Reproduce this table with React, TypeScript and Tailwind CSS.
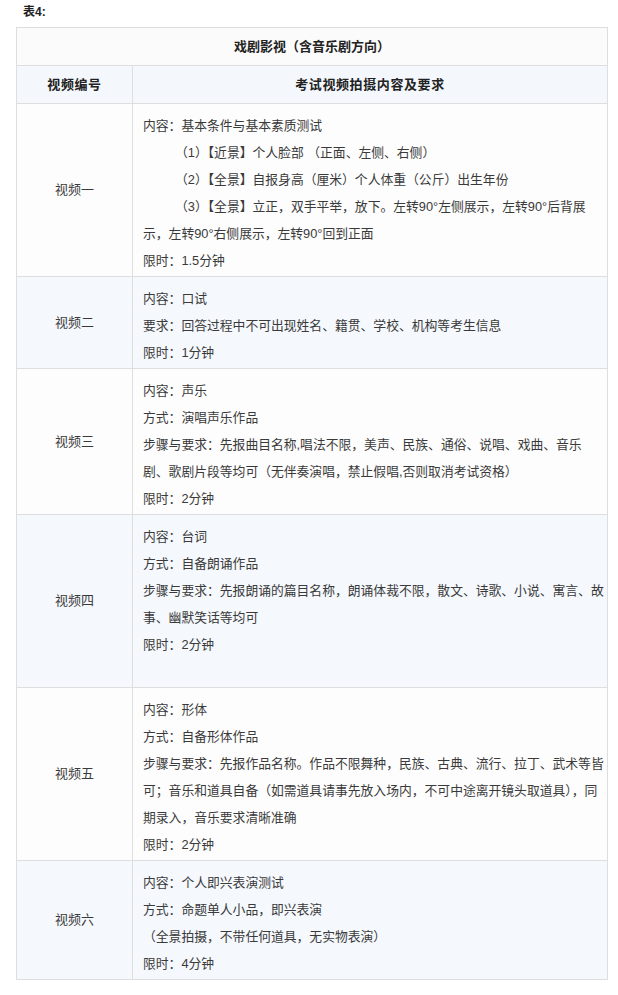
import React from 'react';

type Row = {
  label: string;
  lines: { text: string; indent?: boolean }[];
  blue?: boolean;
  blankEnd?: boolean;
};

const rows: Row[] = [
  {
    label: '视频一',
    lines: [
      { text: '内容：基本条件与基本素质测试' },
      { text: '（1）【近景】个人脸部 （正面、左侧、右侧）', indent: true },
      { text: '（2）【全景】自报身高（厘米）个人体重（公斤）出生年份', indent: true },
      { text: '（3）【全景】立正，双手平举，放下。左转90°左侧展示，左转90°后背展', indent: true },
      { text: '示，左转90°右侧展示，左转90°回到正面' },
      { text: '限时：1.5分钟' },
    ],
  },
  {
    label: '视频二',
    blue: true,
    lines: [
      { text: '内容：口试' },
      { text: '要求：回答过程中不可出现姓名、籍贯、学校、机构等考生信息' },
      { text: '限时：1分钟' },
    ],
  },
  {
    label: '视频三',
    lines: [
      { text: '内容：声乐' },
      { text: '方式：演唱声乐作品' },
      { text: '步骤与要求：先报曲目名称,唱法不限，美声、民族、通俗、说唱、戏曲、音乐' },
      { text: '剧、歌剧片段等均可（无伴奏演唱，禁止假唱,否则取消考试资格）' },
      { text: '限时：2分钟' },
    ],
  },
  {
    label: '视频四',
    blue: true,
    blankEnd: true,
    lines: [
      { text: '内容：台词' },
      { text: '方式：自备朗诵作品' },
      { text: '步骤与要求：先报朗诵的篇目名称，朗诵体裁不限，散文、诗歌、小说、寓言、故' },
      { text: '事、幽默笑话等均可' },
      { text: '限时：2分钟' },
    ],
  },
  {
    label: '视频五',
    lines: [
      { text: '内容：形体' },
      { text: '方式：自备形体作品' },
      { text: '步骤与要求：先报作品名称。作品不限舞种，民族、古典、流行、拉丁、武术等皆' },
      { text: '可；音乐和道具自备（如需道具请事先放入场内，不可中途离开镜头取道具），同' },
      { text: '期录入，音乐要求清晰准确' },
      { text: '限时：2分钟' },
    ],
  },
  {
    label: '视频六',
    blue: true,
    lines: [
      { text: '内容：个人即兴表演测试' },
      { text: '方式：命题单人小品，即兴表演' },
      { text: '（全景拍摄，不带任何道具，无实物表演）' },
      { text: '限时：4分钟' },
    ],
  },
];

export default function App() {
  return (
    <div
      className="min-h-[995px] w-[618px] bg-white text-[13px] text-[#3a3a3a]"
      style={{ fontFamily: '"Liberation Sans", "Noto Sans CJK SC", sans-serif' }}
    >
      <div className="h-[27px] px-[23px] pt-[3px] text-[12px] font-bold leading-[18px] text-[#222]">表4:</div>

      <table className="ml-[16px] w-[592px] table-fixed border-collapse">
        <colgroup>
          <col className="w-[116px]" />
          <col />
        </colgroup>
        <tbody>
          <tr className="bg-[#fbfbfb]">
            <td colSpan={2} className="h-[38px] border border-[#dedede] text-center font-bold text-[#222]">
              戏剧影视（含音乐剧方向）
            </td>
          </tr>
          <tr className="bg-[#f4f8fd]">
            <td className="h-[38px] border border-[#dedede] text-center font-bold tracking-[0.6px] text-[#222]">
              视频编号
            </td>
            <td className="h-[38px] border border-[#dedede] text-center font-bold tracking-[0.6px] text-[#222]">
              考试视频拍摄内容及要求
            </td>
          </tr>
          {rows.map((row) => (
            <tr key={row.label} className={row.blue ? 'bg-[#f5f8fd]' : 'bg-[#fdfdfd]'}>
              <td className="border border-[#dedede] text-center align-middle">{row.label}</td>
              <td className="border border-[#dedede] px-[10px] pt-[8px] pb-[2px] align-top text-[12.8px] leading-[27px]">
                {row.lines.map((line, i) => (
                  <div
                    key={i}
                    className={`h-[27px] overflow-visible whitespace-nowrap ${line.indent ? 'pl-[32px]' : ''}`}
                  >
                    {line.text}
                  </div>
                ))}
                {row.blankEnd && <div className="h-[27px]" />}
              </td>
            </tr>
          ))}
        </tbody>
      </table>
    </div>
  );
}
